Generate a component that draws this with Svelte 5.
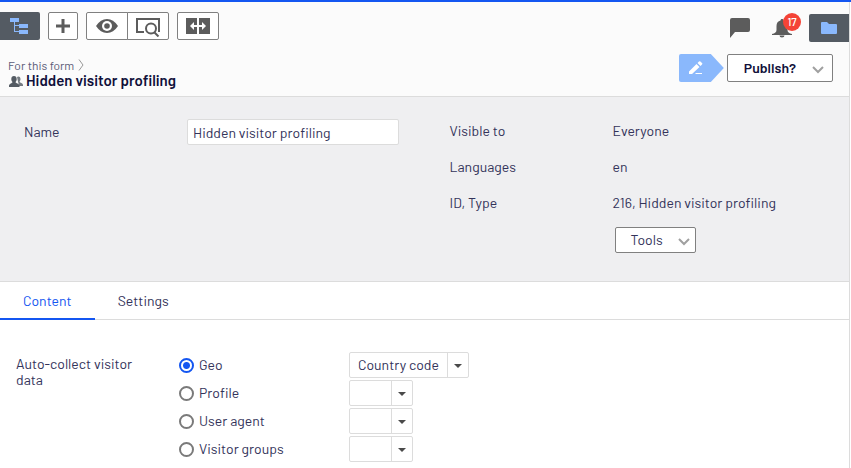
<script lang="ts">
	let name = $state('Hidden visitor profiling');
	let activeTab = $state('Content');
	let source = $state('Geo');

	const tabs = ['Content', 'Settings'];

	const sources = [
		{ label: 'Geo', value: 'Country code' },
		{ label: 'Profile', value: '' },
		{ label: 'User agent', value: '' },
		{ label: 'Visitor groups', value: '' }
	];

	const details = [
		{ label: 'Visible to', value: 'Everyone' },
		{ label: 'Languages', value: 'en' },
		{ label: 'ID, Type', value: '216, Hidden visitor profiling' }
	];
</script>

<div class="shell">
	<main>
		<header>
			<div class="toolbar">
				<button class="tool dark tree" aria-label="Toggle navigation">
					<svg width="20" height="18" viewBox="0 0 20 18" fill="#8ab8fc">
						<path d="M0 1h9v4H5v3h4V7h9v4H9V9H5v5h4v-1h9v4H9v-2H4V5H0z" />
					</svg>
				</button>
				<button class="tool" aria-label="Add">
					<svg width="16" height="16" viewBox="0 0 16 16" fill="#5c5c5c">
						<path d="M6.500 1h3v5.500H15v3H9.500V15h-3V9.500H1v-3h5.500z" />
					</svg>
				</button>
				<div class="group">
					<button class="tool wide" aria-label="View">
						<svg width="22" height="14" viewBox="0 0 22 14">
							<path d="M0 7C3 2.500 6.700 0 11 0s8 2.500 11 7c-3 4.500-6.700 7-11 7S3 11.500 0 7z" fill="#5c5c5c" />
							<circle cx="11" cy="7" r="5" fill="#fff" />
							<circle cx="11" cy="7" r="2.800" fill="#5c5c5c" />
						</svg>
					</button>
					<button class="tool wide" aria-label="Preview">
						<svg width="26" height="22" viewBox="0 0 26 22" fill="none" stroke="#5c5c5c">
							<path d="M9 17H2V4h22v13" stroke-width="2" />
							<circle cx="16" cy="13.500" r="5" fill="#fff" stroke-width="2" />
							<path d="M19.500 17.500l4 4" stroke-width="2" />
						</svg>
					</button>
				</div>
				<button class="tool wide" aria-label="Compare">
					<svg width="24" height="16" viewBox="0 0 24 16">
						<path d="M0 0h11v16H0zM13 0h11v16H13z" fill="#5c5c5c" />
						<path d="M4 8l4-4v3h3v2H8v3zM20 8l-4-4v3h-3v2h3v3z" fill="#fff" />
					</svg>
				</button>

				<div class="status">
					<button aria-label="Comments">
						<svg width="20" height="20" viewBox="0 0 20 20" fill="#5c5c5c">
							<path d="M2 0h16a2 2 0 0 1 2 2v10a2 2 0 0 1-2 2H5l-5 6V2a2 2 0 0 1 2-2z" />
						</svg>
					</button>
					<button class="bell" aria-label="Notifications">
						<svg width="20" height="20" viewBox="0 0 20 20" fill="#5c5c5c">
							<path d="M10 1c1 0 1.500.7 1.500 1.500C14 3 15.500 5 15.500 8v4c0 2 1.500 3.500 4.500 4v1H0v-1c3-.5 4.500-2 4.500-4V8c0-3 1.500-5 4-5.500C8.500 1.700 9 1 10 1zM7.500 17.500h5a2.500 2 0 0 1-5 0z" />
						</svg>
						<span class="badge">17</span>
					</button>
					<button class="tool dark folder" aria-label="Assets">
						<svg width="16" height="12" viewBox="0 0 16 12" fill="#8ab8fc">
							<path d="M1 0h5l2 2h7a1 1 0 0 1 1 1v8a1 1 0 0 1-1 1H1a1 1 0 0 1-1-1V1a1 1 0 0 1 1-1z" />
						</svg>
					</button>
				</div>
			</div>

			<div class="heading">
				<div class="title">
					<nav>
						<a href="#forms">For this form</a>
						<svg width="6" height="12" viewBox="0 0 6 12" fill="none" stroke="#999">
							<path d="M1 0.500l4 5.500l-4 5.500" />
						</svg>
					</nav>
					<h1>
						<svg width="15" height="14" viewBox="0 0 15 14" fill="#545b63">
							<path d="M9 4C10 3 12.500 3.200 12.500 6c0 1.300-.4 2-1 2.700 0 1 3.500 1 3.500 3.300v1h-4z" opacity="0.8" />
							<path d="M6 3c1.700 0 2.700 1.200 2.700 3 0 1.400-.5 2.300-1.200 3 0 1.500 4 1.200 4 4v1H1v-1c0-2.800 3.500-2.500 3.500-4-.7-.7-1.200-1.600-1.200-3C3.300 4.200 4.300 3 6 3z" />
						</svg>
						Hidden visitor profiling
					</h1>
				</div>
				<div class="publish">
					<span class="stage">
						<svg width="14" height="14" viewBox="0 0 14 14" fill="#fff">
							<path d="M0 10.500L7.500 3l3 3L3 13H0zM8.500 2L10 .500q.7-.7 1.400 0l1.600 1.600q.7.700 0 1.400L11.500 5zM7 12h6v1H6z" />
						</svg>
					</span>
					<button class="menu strong">
						Publish?
						<svg width="12" height="8" viewBox="0 0 12 8" fill="none" stroke="#a0a0a0" stroke-width="2">
							<path d="M1 1l5 5l5-5" />
						</svg>
					</button>
				</div>
			</div>
		</header>

		<section class="summary">
			<div class="fields">
				<label for="name">Name</label>
				<input id="name" type="text" bind:value={name} />
			</div>
			<div>
				<dl class="fields">
					{#each details as detail}
						<dt>{detail.label}</dt>
						<dd>{detail.value}</dd>
					{/each}
				</dl>
				<div class="fields actions">
					<button class="menu">
						Tools
						<svg width="12" height="8" viewBox="0 0 12 8" fill="none" stroke="#a0a0a0" stroke-width="2">
							<path d="M1 1l5 5l5-5" />
						</svg>
					</button>
				</div>
			</div>
		</section>

		<div class="tabs" role="tablist">
			{#each tabs as tab}
				<button
					role="tab"
					aria-selected={activeTab === tab}
					class:active={activeTab === tab}
					onclick={() => (activeTab = tab)}
				>
					{tab}
				</button>
			{/each}
		</div>

		<section class="content" role="radiogroup" aria-labelledby="collect-label">
			<span id="collect-label" class="legend">Auto-collect visitor data</span>
			<div class="options">
				{#each sources as item}
					<div class="option">
						<label>
							<input type="radio" name="source" value={item.label} bind:group={source} />
							{item.label}
						</label>
						<div class="select">
							<select class:empty={!item.value} aria-label={item.label + ' value'}>
								<option>{item.value}</option>
							</select>
							<span class="arrow"></span>
						</div>
					</div>
				{/each}
			</div>
		</section>
	</main>
	<aside></aside>
</div>

<style>
	:global(body) {
		background: #fff;
	}

	.shell {
		display: flex;
		min-height: 100vh;
		box-sizing: border-box;
		border-top: 2px solid #1456f1;
		font-family: Barlow, Roboto, sans-serif;
		font-size: 14px;
		line-height: 16px;
		color: #33335a;
	}

	main {
		flex: 1;
		min-width: 0;
	}

	/* edge of the collapsed asset pane */
	aside {
		width: 1px;
		border-left: 1px solid #dcdcdc;
	}

	button,
	input,
	select {
		box-sizing: border-box;
		margin: 0;
		font: inherit;
		color: inherit;
	}

	button {
		display: flex;
		align-items: center;
		justify-content: center;
		padding: 0;
		border: 0;
		background: none;
		cursor: pointer;
	}

	header {
		background: #fbfbfb;
		border-bottom: 1px solid #dcdcdc;
		padding-bottom: 8px;
	}

	.toolbar {
		display: flex;
		align-items: flex-start;
		gap: 8px;
		padding-top: 10px;
	}

	.tool {
		width: 30px;
		height: 28px;
		border: 1px solid #808080;
		border-radius: 2px;
		background: #fff;
	}

	.wide {
		width: 42px;
	}

	.dark {
		width: 40px;
		border: 0;
		background: #545b63;
	}

	.tree {
		border-radius: 0 2px 2px 0;
	}

	.folder {
		border-radius: 2px 0 0 2px;
	}

	.group {
		display: flex;
	}

	.group .tool:first-child {
		border-radius: 2px 0 0 2px;
	}

	.group .tool + .tool {
		margin-left: -1px;
		border-radius: 0 2px 2px 0;
	}

	.status {
		display: flex;
		align-items: center;
		margin-left: auto;
		padding-top: 2px;
	}

	.bell {
		position: relative;
		margin: 0 17px 0 22px;
	}

	.badge {
		position: absolute;
		top: -5px;
		left: 11px;
		width: 18px;
		height: 18px;
		border-radius: 50%;
		background: #f44336;
		color: #fff;
		font-size: 11px;
		font-weight: 500;
		line-height: 18px;
		text-align: center;
	}

	.heading {
		display: flex;
		align-items: flex-start;
		justify-content: space-between;
		padding: 12px 16px 0 8px;
	}

	.title {
		padding-top: 4px;
	}

	nav {
		display: flex;
		align-items: center;
		gap: 4px;
		font-size: 12px;
		line-height: 14px;
	}

	nav a {
		color: #5a5a78;
		text-decoration: none;
	}

	h1 {
		display: flex;
		align-items: center;
		gap: 3px;
		margin: 0;
		font-size: 15px;
		font-weight: 600;
		line-height: 16px;
		color: #10103a;
	}

	.publish {
		display: flex;
		gap: 3px;
	}

	.stage {
		display: flex;
		align-items: center;
		box-sizing: border-box;
		width: 45px;
		height: 28px;
		padding-left: 10px;
		border-radius: 2px;
		background: #8ab8fc;
		clip-path: polygon(0 0, 32px 0, 100% 50%, 32px 100%, 0 100%);
	}

	.menu {
		gap: 15px;
		height: 26px;
		padding: 0 5px 0 15px;
		border: 1px solid #808080;
		border-radius: 2px;
		background: #fff;
	}

	.menu svg {
		margin-top: 4px;
	}

	.strong {
		gap: 16px;
		height: 28px;
		padding: 0 8px 0 16px;
		font-weight: 600;
		color: #10103a;
	}

	.summary {
		display: grid;
		grid-template-columns: 1fr 1fr;
		column-gap: 2px;
		padding: 22px 0 28px;
		border-bottom: 1px solid #dcdcdc;
		background: #efeff1;
	}

	.fields {
		display: grid;
		grid-template-columns: 163px 1fr;
		align-items: center;
		align-content: start;
		row-gap: 12px;
		margin: 0;
		padding-left: 24px;
		line-height: 24px;
	}

	.fields input {
		width: 212px;
		height: 26px;
		padding: 0 5px;
		border: 1px solid #dcdcdc;
		border-radius: 2px;
		background: #fff;
	}

	dd {
		margin: 0;
	}

	.actions {
		margin-top: 12px;
	}

	.actions .menu {
		grid-column: 2;
		justify-self: start;
		margin-left: 2px;
	}

	.tabs {
		display: flex;
		border-bottom: 1px solid #dcdcdc;
	}

	.tabs button {
		height: 38px;
		margin-bottom: -1px;
		padding: 2px 23px 0;
		border-bottom: 2px solid transparent;
	}

	.tabs .active {
		border-color: #1456f1;
		color: #1456f1;
	}

	.content {
		display: flex;
		padding: 32px 16px 6px;
	}

	.legend {
		width: 140px;
		padding: 4px 23px 0 0;
	}

	.options {
		display: flex;
		flex-direction: column;
		gap: 2px;
	}

	.option {
		display: flex;
		align-items: center;
	}

	.option label {
		display: flex;
		align-items: center;
		gap: 5px;
		width: 170px;
	}

	.option input {
		appearance: none;
		width: 15px;
		height: 15px;
		border: 2px solid #7a7a7a;
		border-radius: 50%;
		background: #fff;
	}

	.option input:checked {
		border-color: #1456f1;
		background: radial-gradient(#1456f1 3px, #fff 4px);
	}

	.select {
		display: flex;
		position: relative;
	}

	select {
		appearance: none;
		width: 120px;
		height: 26px;
		padding: 0 22px 0 8px;
		border: 1px solid #dcdcdc;
		border-radius: 2px;
		background: #fff;
	}

	select.empty {
		width: 64px;
	}

	.arrow {
		position: absolute;
		top: 0;
		right: 0;
		width: 21px;
		height: 26px;
		border-left: 1px solid #dcdcdc;
		pointer-events: none;
	}

	.arrow::after {
		content: '';
		position: absolute;
		top: 12px;
		left: 6px;
		border: 4px solid transparent;
		border-top-color: #4a4a4a;
		border-bottom: 0;
	}
</style>
